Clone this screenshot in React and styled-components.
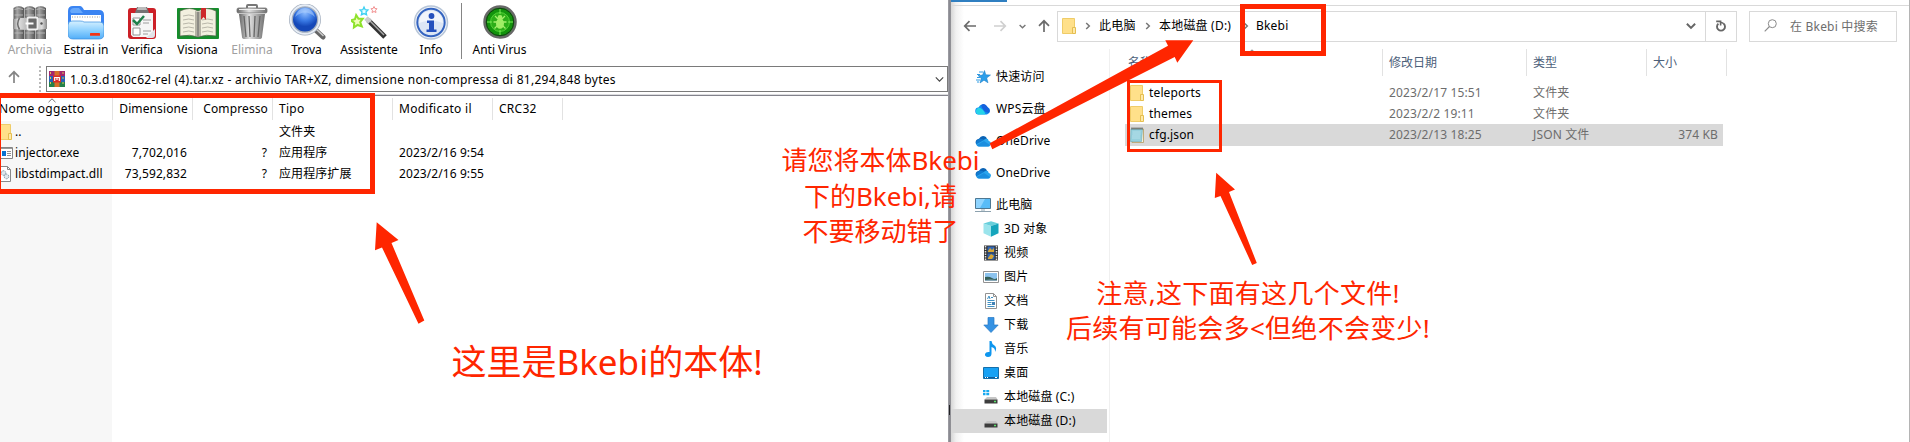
import React from "react";
import styled, { createGlobalStyle } from "styled-components";

const GlobalStyle = createGlobalStyle`
  * { box-sizing: border-box; }
  body {
    margin: 0;
    overflow: hidden;
    background: #fff;
    color: #000;
    font: 12px "Noto Sans", "Noto Sans CJK SC", sans-serif;
  }
  svg { display: block; flex: none; }
`;

const RED = "#ff2600";

const Desktop = styled.div`
  position: relative;
  display: flex;
  width: 1910px;
  height: 442px;
  overflow: hidden;
  white-space: nowrap;
`;

/* ---------- archive window ---------- */

const ArchiveWindow = styled.section`
  display: flex;
  flex-direction: column;
  width: 948px;
  background: #fff;
`;

const Toolbar = styled.div`
  display: flex;
  height: 62px;
  padding: 4px 0 0 2px;
`;

const ToolButton = styled.div`
  display: flex;
  flex-direction: column;
  align-items: center;
  width: ${(p) => p.$width}px;
  line-height: 19px;
  color: ${(p) => (p.$disabled ? "#a0a0a0" : "#000")};
`;

const ToolSeparator = styled.div`
  width: 1px;
  height: 56px;
  margin: -1px 2px 0 3px;
  background: #858585;
`;

const PathRow = styled.div`
  display: flex;
  height: 33px;
  padding-top: 4px;
  border-bottom: 1px solid #dcdcdf;
`;

const UpButton = styled.div`
  display: flex;
  justify-content: center;
  width: 27px;
  padding-top: 4px;
`;

const Grip = styled.div`
  width: 2px;
  height: 27px;
  margin: 0 5px 0 12px;
  background: repeating-linear-gradient(#b9b9b9 0 2px, #fff 2px 4px);
`;

const PathBox = styled.div`
  display: flex;
  align-items: center;
  flex: 1;
  height: 26px;
  padding: 0 3px 0 2px;
  border: 1px solid #7a7a7a;
`;

const PathText = styled.span`
  flex: 1;
  padding: 1px 0 0 5px;
  letter-spacing: 0.29px;
`;

const ArchiveTable = styled.div`
  flex: 1;
  border-top: 1px solid #83838c;
  background: linear-gradient(#f7f7f7, #f7f7f7) 0 25px / 112px 100% no-repeat;
`;

const ArchiveRow = styled.div`
  display: grid;
  grid-template-columns: 113px 80px 80px 120px 100px 70px;
  height: ${(p) => (p.$header ? 25 : 21)}px;
  line-height: ${(p) => (p.$header ? 25 : 21)}px;
  letter-spacing: ${(p) => (p.$header ? 0.27 : 0.08)}px;
`;

const ArchiveCell = styled.div`
  display: flex;
  align-items: center;
  justify-content: ${(p) => (p.$right ? "flex-end" : "flex-start")};
  gap: 2px;
  padding: 0 6px;
  ${(p) => p.$name && "padding: 0;"}
  ${(p) => p.$right && p.$header && "letter-spacing: 0.12px; padding-right: 5px;"}
  ${(p) =>
    p.$header &&
    `background: linear-gradient(#e2e2e2, #e2e2e2) right 0 top 2px / 1px 22px no-repeat;`}
`;

const NameText = styled.span`
  margin-left: ${(p) => p.$offset || 0}px;
`;

const HeaderCaret = styled.span`
  align-self: flex-start;
  margin: 2px 0 0 -38px;
`;

const WindowEdge = styled.div`
  width: 3px;
  background: linear-gradient(#202024, #202024) 1px 405px / 1px 10px no-repeat,
    linear-gradient(90deg, #a2a2a8, #85858c 60%, #97979b);
`;

/* ---------- explorer window ---------- */

const Explorer = styled.section`
  display: flex;
  flex-direction: column;
  width: 959px;
  border-right: 1px solid #b4b4b4;
  background: linear-gradient(90deg, #d6d6d6, #f1f1f1 5px, #fff 13px);
`;

const TabStrip = styled.div`
  height: 6px;
  border-bottom: 1px solid #d9d9d9;
  background: linear-gradient(#2f7fc1, #2f7fc1) 0 0 / 56px 2px no-repeat;
`;

const NavBar = styled.div`
  display: flex;
  align-items: center;
  height: 43px;
  padding: 0 12px 3px 12px;
`;

const NavButtons = styled.div`
  display: flex;
  align-items: center;
  width: 94px;
`;

const NavForward = styled.div`
  display: flex;
  justify-content: center;
  width: 42px;
  padding-left: 4px;
`;

const NavUp = styled.div`
  padding-left: 11px;
`;

const AddressBar = styled.div`
  display: flex;
  align-items: center;
  width: 680px;
  height: 31px;
  padding-left: 4px;
  border: 1px solid #d9d9d9;
  background: #fff;
`;

const Crumb = styled.span`
  width: ${(p) => p.$width}px;
  line-height: 29px;
  height: 31px;
  letter-spacing: 0.2px;
`;

const CrumbArrow = styled.span`
  display: flex;
  justify-content: center;
  width: ${(p) => p.$width}px;
`;

const AddressSpacer = styled.div`
  flex: 1;
`;

const AddressAction = styled.div`
  display: flex;
  align-items: center;
  justify-content: center;
  width: ${(p) => p.$width}px;
  height: 29px;
  border-left: ${(p) => (p.$divided ? "1px solid #d9d9d9" : "none")};
`;

const SearchBox = styled.div`
  display: flex;
  align-items: center;
  gap: 13px;
  width: 148px;
  height: 31px;
  margin-left: 12px;
  padding: 0 0 1px 14px;
  border: 1px solid #d9d9d9;
  color: #6d6d6d;
  letter-spacing: 0.2px;
`;

const ExplorerBody = styled.div`
  display: flex;
  flex: 1;
`;

const Sidebar = styled.nav`
  width: 159px;
  padding-top: 12px;
  border-right: 1px solid #f0f0f0;
`;

const SideItem = styled.div`
  display: flex;
  align-items: center;
  gap: 5px;
  width: 156px;
  height: ${(p) => (p.$child ? 24 : 32)}px;
  margin-bottom: ${(p) => (p.$last ? -4 : 0)}px;
  padding-left: ${(p) => (p.$child ? 32 : 24)}px;
  background: ${(p) => (p.$selected ? "#d9d9d9" : "transparent")};
`;

const SideLabel = styled.span`
  height: 24px;
  line-height: 23px;
  letter-spacing: 0.15px;
`;

const FileList = styled.div`
  flex: 1;
  padding-left: 15px;
`;

const FileRow = styled.div`
  display: grid;
  grid-template-columns: 258px 144px 120px 76px;
  width: 598px;
  height: ${(p) => p.$height}px;
  line-height: ${(p) => p.$height}px;
  letter-spacing: 0.14px;
  color: #6d6d6d;
  background: ${(p) => (p.$selected ? "#d9d9d9" : "transparent")};
`;

const FileHeader = styled(FileRow)`
  grid-template-columns: 258px 144px 120px 80px;
  width: 602px;
  margin-bottom: 6px;
  letter-spacing: 0;
  color: #4c607a;
`;

const HeaderCell = styled.div`
  display: flex;
  justify-content: space-between;
  padding-left: ${(p) => (p.$first ? 3 : 6)}px;
  border-right: 1px solid #e2e2e2;
`;

const SortMark = styled.span`
  width: 134px;
`;

const FileCell = styled.div`
  padding: 0 5px 0 6px;
  text-align: ${(p) => (p.$right ? "right" : "left")};
`;

const FileName = styled.div`
  display: flex;
  align-items: center;
  gap: 5px;
  padding-left: 5px;
  color: #000;
`;

/* ---------- annotations ---------- */

const MarkBox = styled.div`
  position: absolute;
  left: ${(p) => p.$x}px;
  top: ${(p) => p.$y}px;
  width: ${(p) => p.$w}px;
  height: ${(p) => p.$h}px;
  border: ${(p) => p.$stroke}px solid ${RED};
`;

const Arrows = styled.svg`
  position: absolute;
  left: 0;
  top: 0;
  fill: ${RED};
`;

const Note = styled.div`
  position: absolute;
  left: ${(p) => p.$x}px;
  top: ${(p) => p.$y}px;
  width: ${(p) => p.$w}px;
  color: ${RED};
  font-size: ${(p) => p.$size}px;
  line-height: ${(p) => p.$line}px;
  letter-spacing: ${(p) => p.$track || 0}px;
  text-align: center;
`;

/* ---------- icons ---------- */

const Ico = ({ s = 16, vb, children, w, h }) => (
  <svg width={w || s} height={h || s} viewBox={vb || `0 0 ${w || s} ${h || s}`}>
    {children}
  </svg>
);

const ArchiveIcon = () => (
  <Ico s={36}>
    <defs>
      <linearGradient id="book">
        <stop offset="0" stopColor="#5c5c5c" />
        <stop offset=".35" stopColor="#a6a6a6" />
        <stop offset="1" stopColor="#555" />
      </linearGradient>
      <linearGradient id="strap">
        <stop offset="0" stopColor="#8b8b8b" />
        <stop offset=".15" stopColor="#e2e2e2" />
        <stop offset=".5" stopColor="#a8a8a8" />
        <stop offset=".85" stopColor="#dcdcdc" />
        <stop offset="1" stopColor="#8b8b8b" />
      </linearGradient>
    </defs>
    {[1.5, 12.5, 23.5].map((x) => (
      <g key={x}>
        <path d={`M${x} 4q5-4 10.500 0v31H${x}z`} fill="url(#book)" />
        <path d={`M${x + 1} 5.500q4-2 8.500 0M${x + 1} 11h8.500M${x + 1} 29h8.500`} fill="none" stroke="#c2c2c2" strokeWidth=".8" />
      </g>
    ))}
    <path d="M1 15q17-3 34 0v10q-17 2-34 0z" fill="url(#strap)" />
    <path d="M7.500 14q-3.500 5.500 0 11.500" fill="none" stroke="#6e6e6e" strokeWidth="1.500" />
    <rect x="15.500" y="13.500" width="10" height="12" rx="1.500" fill="#6b6b6b" stroke="#f0f0f0" strokeWidth="1.800" />
    <path d="M13.500 19.500h8" stroke="#fff" strokeWidth="2" />
    <circle cx="29.500" cy="19.500" r="1.200" fill="#555" />
  </Ico>
);

const ExtractIcon = () => (
  <Ico s={36}>
    <defs>
      <linearGradient id="foldf" x2="0" y2="1">
        <stop offset="0" stopColor="#d6f0ff" />
        <stop offset=".5" stopColor="#91d2ff" />
        <stop offset="1" stopColor="#52aef8" />
      </linearGradient>
    </defs>
    <path d="M0 7q0-5 5-5h7q2 0 4 4h15q5 0 5 5v16H0z" fill="#3a84f2" />
    <path d="M2 7q1-3 4-3h5l4 5H3z" fill="#67a8fb" />
    <path d="M3 11h30v14H3z" fill="#fff" />
    <path d="M4 13h28" stroke="#ccc" strokeWidth="2" strokeDasharray="1 1.500" />
    <path d="M0 21q0-4 4-4h8q3 0 4 1h16q4 0 4 4v8q0 5-5 5H5q-5 0-5-5z" fill="url(#foldf)" stroke="#388de0" strokeWidth=".7" />
    <rect x="22" y="29" width="10" height="2.800" rx=".6" fill="#f43316" />
  </Ico>
);

const VerifyIcon = () => (
  <Ico s={36}>
    <rect x="4" y="4" width="28" height="31" rx="3" fill="#cc2027" />
    <path d="M7 9h22v23l-3 1H9l-2-2z" fill="#f6f6f6" />
    <path d="M22 34l9-9v6q0 3-3 3z" fill="#e1e3e8" />
    <path d="M13 3h10l2 6H11z" fill="#747474" />
    <path d="M14 3h8l1 3H13z" fill="#bbb" />
    <path d="M9 14h7v7H9zM9 24h7v7H9z" fill="#fff" stroke="#888" strokeWidth=".9" />
    <path d="M19 16h8M19 19h6M19 27h8M19 30h5" stroke="#9c9c9c" />
    <path d="M9 16l4 4 7-8" fill="none" stroke="#20804b" strokeWidth="2.500" />
  </Ico>
);

const ViewIcon = () => (
  <Ico w={42} h={36}>
    <rect y="4" width="42" height="31" rx="1" fill="#168d2c" />
    <path d="M3 7q10-5 18 0 8-5 18 0v25q-10-2-18 1-8-3-18-1z" fill="#f2f0df" stroke="#59634f" strokeWidth=".7" />
    <path d="M18 7l3 1 3-1v25h-6z" fill="#b5b3a5" />
    <path d="M21 8v25" stroke="#666" />
    <path d="M6 12q6-2 11 0M6 16q6-2 11 0M6 20q6-2 11 0M6 24q6-2 11 0M6 28q6-2 11 0M25 16q6-2 11 0M25 20q6-2 11 0M25 24q6-2 11 0M25 28q6-2 11 0" fill="none" stroke="#b9b7aa" />
    <path d="M24 4h5v12l-2.500-3-2.500 3z" fill="#cd292b" />
  </Ico>
);

const TrashIcon = () => (
  <Ico s={36}>
    <defs>
      <linearGradient id="trash">
        <stop offset="0" stopColor="#666" />
        <stop offset=".4" stopColor="#e0e0e0" />
        <stop offset="1" stopColor="#707070" />
      </linearGradient>
    </defs>
    <path d="M13 4V2q0-1 1-1h8q1 0 1 1v2" fill="none" stroke="#777" strokeWidth="2" />
    <path d="M5 10h26l-3 23q0 2-3 2H11q-3 0-3-2z" fill="url(#trash)" />
    <path d="M10 12l2 21M15 12l1 21M21 12l-1 21M26 12l-2 21" stroke="#666" strokeWidth="1.300" />
    <rect x="3" y="4" width="30" height="5" rx="1.500" fill="url(#trash)" stroke="#777" strokeWidth=".8" />
    <path d="M5 5.500h26" stroke="#eee" />
  </Ico>
);

const FindIcon = () => (
  <Ico w={38} h={36}>
    <defs>
      <radialGradient id="lens" cy=".25">
        <stop offset="0" stopColor="#91bfff" />
        <stop offset=".6" stopColor="#3979e4" />
        <stop offset="1" stopColor="#1548b8" />
      </radialGradient>
    </defs>
    <path d="M27 25.500l8 7.500" stroke="#666" strokeWidth="5" strokeLinecap="round" />
    <path d="M27 24l8.500 8" stroke="#ccc" strokeWidth="1.500" />
    <circle cx="17" cy="15.500" r="14" fill="url(#lens)" stroke="#a2adbd" strokeWidth="4" />
    <circle cx="17" cy="15.500" r="14.300" fill="none" stroke="#e7edf5" strokeWidth="2" />
    <path d="M7 13q10-9 20 0-3-9-10-9T7 13" fill="#b9d8ff" opacity=".5" />
  </Ico>
);

const star = "M0-6L1.800-2 6-1.500 3 1.500 4 6 0 4-4 6-3 1.500-6-1.500-1.800-2z";
const WizardIcon = () => (
  <Ico s={36}>
    <path d="M17 16l17 17" stroke="#333" strokeWidth="5" />
    <path d="M17 15l16 16" stroke="#aaa" strokeWidth="1.500" />
    <path d="M15 14l4 4" stroke="#ccc" strokeWidth="5" />
    <path d={star} transform="translate(6 17) rotate(-8)" fill="#f0ffb8" stroke="#8ee22c" strokeWidth="2" />
    <path d={star} transform="translate(13 7) scale(.65)" fill="#e8fdff" stroke="#3ed1f2" strokeWidth="2" />
    <path d={star} transform="translate(23 5.500) scale(.5)" fill="#fff" stroke="#f29090" strokeWidth="2" />
  </Ico>
);

const InfoIcon = () => (
  <Ico s={36}>
    <circle cx="18" cy="18.500" r="16.500" fill="#eef2f8" stroke="#b8c6d8" strokeWidth="1.500" />
    <circle cx="18" cy="18.500" r="13.700" fill="#dce6f5" stroke="#3464c0" strokeWidth="2" />
    <path d="M6 19q12-5 24 0-1-12-12-12T6 19" fill="#fff" opacity=".6" />
    <circle cx="18.500" cy="12" r="2.900" fill="#2450bd" />
    <path d="M14 16.500h7v9h2.500v2.500h-10v-2.500h2.500V19h-2z" fill="#2450bd" />
  </Ico>
);

const VirusIcon = () => (
  <Ico s={36}>
    <circle cx="18" cy="18" r="15.500" fill="#13940c" stroke="#686868" strokeWidth="2.500" />
    <circle cx="18" cy="18" r="13.700" fill="none" stroke="#143915" strokeWidth="1" />
    <circle cx="18" cy="18" r="9.500" fill="#2cae18" stroke="#62dd43" strokeWidth=".8" />
    <path d="M18 5v5M18 26v5M5 18h5M26 18h5" stroke="#7ced59" />
    <path d="M13 12l3 3M23 12l-3 3M11.500 18h13M12.500 24.500l3.500-3.500M23.500 24.500l-3.500-3.500" stroke="#a4ee6d" strokeWidth="1.300" />
    <ellipse cx="18" cy="19.500" rx="4" ry="5.200" fill="#a0ee66" />
    <circle cx="18" cy="13.500" r="2.400" fill="#a0ee66" />
  </Ico>
);

const RarIcon = () => (
  <Ico>
    <path d="M0 0h16v5H0z" fill="#a3276e" />
    <path d="M0 5h16v6H0z" fill="#2761b8" />
    <path d="M0 11h16v5H0z" fill="#24814a" />
    <path d="M1.500 1v14M14 1v14" stroke="#dac457" strokeWidth="1" strokeDasharray="2 3" />
    <path d="M5.500 0h5v16h-5z" fill="#d6702a" />
    <path d="M4 4.500h8v7H4z" fill="#d82c28" />
    <path d="M5.700 10V6.500h4.600V10M8 6v3" fill="none" stroke="#fff" strokeWidth="1.200" />
  </Ico>
);

const FolderIcon = () => (
  <Ico w={14} h={16}>
    <path d="M.5.500h12v15H.5z" fill="#ffe08a" stroke="#efcc68" />
    <path d="M10.500 9.500h3v6h-3z" fill="#ffe9a8" stroke="#e5be4f" />
  </Ico>
);

const ParentFolderIcon = () => (
  <Ico w={13} h={16}>
    <path d="M-2 .5h12.500v15H-2z" fill="#ffe08a" stroke="#efcc68" />
    <path d="M8.500 9.500h3v6h-3z" fill="#ffe9a8" stroke="#e5be4f" />
  </Ico>
);

const ExeIcon = () => (
  <Ico w={13} h={12}>
    <path d="M-2 .5h14.500v11H-2z" fill="#fff" stroke="#858585" />
    <path d="M0 1.500h12" stroke="#999" />
    <path d="M2 4h4v5H2z" fill="#0a73d0" />
    <path d="M7 4.500h4M7 6.500h4M7 8.500h4" stroke="#909090" />
  </Ico>
);

const DllIcon = () => (
  <Ico w={13} h={16}>
    <path d="M-2 .5H7.500l3 3v12H-2z" fill="#fff" stroke="#898989" />
    <path d="M7.500.500v3h3" fill="none" stroke="#898989" />
    <circle cx="3.500" cy="7" r="2.300" fill="#dde7ed" stroke="#879aa7" strokeDasharray="1.500 .7" />
    <circle cx="6.500" cy="10.500" r="2.300" fill="#dde7ed" stroke="#879aa7" strokeDasharray="1.500 .7" />
  </Ico>
);

const NoteIcon = () => (
  <Ico w={14} h={16}>
    <path d="M2 2h11.500v13.500H2z" fill="#f8f4e0" stroke="#b49c61" strokeWidth=".8" />
    <path d="M1 2h11.500l-1 12.500H.500z" fill="#96d0dd" stroke="#6ba8b4" strokeWidth=".6" />
    <path d="M2.500 5h8M2.500 7h8M2 9h8M2 11h8" stroke="#c3e7ee" strokeWidth=".7" />
    <path d="M1.500 1.500h11" stroke="#444" strokeWidth="2" strokeDasharray="1 1" />
  </Ico>
);

const UpArrow = ({ color = "#6b6b6b" }) => (
  <Ico s={14}>
    <path d="M7 13V2M2 6.800L7 1.800l5 5" fill="none" stroke={color} strokeWidth="1.700" />
  </Ico>
);

const SideArrow = ({ color, flip }) => (
  <Ico w={14} h={12}>
    <path d={flip ? "M1 6h11M7.500 1.200L12.300 6l-4.800 4.800" : "M13 6H2M6.500 1.200L1.700 6l4.800 4.800"} fill="none" stroke={color} strokeWidth="1.700" />
  </Ico>
);

const Down = ({ w = 8, color = "#666", sw = 1.6 }) => (
  <Ico w={w} h={w} vb="0 0 8 8">
    <path d="M.7 2.200L4 5.500l3.300-3.300" fill="none" stroke={color} strokeWidth={sw} />
  </Ico>
);

const Right = () => (
  <Ico w={6} h={8}>
    <path d="M1.200 1L4.300 4 1.200 7" fill="none" stroke="#777" strokeWidth="1.500" />
  </Ico>
);

const Caret = () => (
  <Ico w={8} h={5}>
    <path d="M.5 4.200L4 .8l3.500 3.400" fill="none" stroke="#777" />
  </Ico>
);

const Refresh = () => (
  <Ico w={12} h={12}>
    <path d="M3.400 3.600a4 4 0 1 0 5.200 0" fill="none" stroke="#666" strokeWidth="1.900" />
    <path d="M8.800 3.800Q7.500 2.400 5.500 2.500" fill="none" stroke="#666" strokeWidth="1.600" />
    <path d="M1.200 1.400h4.400v4.200" fill="none" stroke="#666" strokeWidth="1.600" />
  </Ico>
);

const Search = () => (
  <Ico w={13} h={13}>
    <circle cx="8.300" cy="4.700" r="4" fill="none" stroke="#8a8a8a" />
    <path d="M5.500 7.500L.7 12.300" stroke="#8a8a8a" strokeWidth="1.100" />
  </Ico>
);

const QuickIcon = () => (
  <Ico>
    <path d="M9.500 1.500l1.300 4.300 4.700.2-3.800 3 1.300 4.800-4-2.600L5 14l1.200-4.800L3 6.500l4.500-.4z" fill="#2b9eea" stroke="#1878c0" strokeWidth=".5" />
    <path d="M4 3h4M2 5.500h3M2 8.500h3M1 11h4M2 13h2" stroke="#2e9be3" />
  </Ico>
);

const WpsIcon = () => (
  <Ico>
    <path d="M4 13.500a3.500 3.500 0 0 1-.5-7A5 5 0 0 1 12.500 6 4 4 0 0 1 12 13.500z" fill="#128cf0" />
    <path d="M2 13q-3-4 1.500-6.500 5 1 7 7H4q-1 0-2-.5" fill="#25d3e8" />
    <path d="M6 4q4-3 7 3 3 2 1 5Q8 11 6 4" fill="#1561dd" />
  </Ico>
);

const OneDriveIcon = () => (
  <Ico>
    <path d="M1 11Q-.5 7 4 5.800 6.500 1.500 11 4l2 4-6 3z" fill="#0a63b5" />
    <path d="M4 6q4-1 6 2l-8 4q-3-3 2-6" fill="#117bd0" />
    <path d="M9 7q1-2 4-1 0 1.500 1 2 3 1 1.500 4Q15 13.500 13 13.500H4q-2 0-3-2z" fill="#2ba5ed" />
    <path d="M2 12l7-4 6 4q-1 1.500-2 1.500H4q-1.500 0-2-1.500" fill="#1b8edf" />
  </Ico>
);

const PcIcon = () => (
  <Ico>
    <path d="M.5 1.500h15v10H.5z" fill="#58bcf8" stroke="#4e7893" />
    <path d="M1 2h9L5 11H1z" fill="#8fd4ff" />
    <path d="M6 12h4v2H6z" fill="#c9d4da" />
    <path d="M0 14.500h16" stroke="#8ca1ae" />
  </Ico>
);

const CubeIcon = () => (
  <Ico>
    <path d="M.5 2.500L8 5v10.800L.5 12.300z" fill="#9be4ec" />
    <path d="M8 .3l7.500 2.200L8 5 .500 2.500z" fill="#68cfdb" />
    <path d="M8 5l7.500-2.500v9.800L8 15.800z" fill="#15a5bc" />
  </Ico>
);

const VideoIcon = () => (
  <Ico>
    <path d="M1 .5h14v15H1z" fill="#333" />
    <path d="M2.500 1v14M13.500 1v14" stroke="#ddd" strokeWidth="1.500" strokeDasharray="1.500 1" />
    <path d="M4.500 1.500h7v6h-7zM4.500 8.500h7v6h-7z" fill="#3166b5" />
    <path d="M5 6l2-3 2 2 2-2v4H5zM5 13l3-4 3 2-2 3H5z" fill="#d7a634" />
  </Ico>
);

const PictureIcon = () => (
  <Ico>
    <path d="M.5 2.500h15v11H.5z" fill="#fff" stroke="#929292" />
    <path d="M2 4h12v8H2z" fill="#8cc3ee" />
    <path d="M2 8q4-1 7 1t5 0v3H2z" fill="#35615a" />
    <path d="M2 11q5-1 12 0v1H2z" fill="#87a7b7" />
  </Ico>
);

const DocIcon = () => (
  <Ico>
    <path d="M2.500.500h8l3 3v12h-11z" fill="#fff" stroke="#929292" />
    <path d="M10.500.500v3h3" fill="none" stroke="#929292" />
    <path d="M4.500 6l1.500-3 1 3M8 4.500h2M4.500 7.500h7M4.500 9.500h4M4.500 11.500h4M4.500 13.500h7" fill="none" stroke="#3f91c4" />
    <path d="M9 9h3v3H9z" fill="#4182b5" />
  </Ico>
);

const DownloadIcon = () => (
  <Ico>
    <path d="M5 .5h6V8h4.200L8 15.500.8 8H5z" fill="#3592e3" stroke="#2678c4" strokeWidth=".7" />
  </Ico>
);

const MusicIcon = () => (
  <Ico>
    <path d="M6.500 0h2q.3 3 3 4.500 3 2.500.5 6.500.5-4-3.500-5v6.500Q8.500 16 5 16q-3.500-.3-3-3 .8-2.500 4.500-2z" fill="#0e96ee" />
  </Ico>
);

const DesktopIcon = () => (
  <Ico>
    <path d="M.5 2.500h15v11H.5z" fill="#17a1f4" stroke="#146fab" />
    <path d="M1 12.500h14" stroke="#0f5c9a" />
    <path d="M2 12.500h1M4 12.500h1M12 12.500h2" stroke="#fff" />
  </Ico>
);

const DriveIcon = ({ windows }) => (
  <Ico>
    {windows && <path d="M0 1h2.500v2.300H0zM3.300 1h2.900v2.300H3.300zM0 4h2.500v2.300H0zM3.300 4h2.900v2.300H3.300z" fill="#18a9ef" />}
    <path d="M4 8h9l1.500 2.500h-13z" fill="#c6c6c6" />
    <path d="M1.500 10.500h13v4h-13z" fill="#3d3d3d" />
    <path d="M11 12.500h2" stroke="#5be36b" strokeWidth="1.300" />
  </Ico>
);

/* ---------- data ---------- */

const tools = [
  ["Archivia", 56, ArchiveIcon, true],
  ["Estrai in", 56, ExtractIcon],
  ["Verifica", 56, VerifyIcon],
  ["Visiona", 55, ViewIcon],
  ["Elimina", 54, TrashIcon, true],
  ["Trova", 55, FindIcon],
  ["Assistente", 70, WizardIcon],
  ["Info", 54, InfoIcon],
];

const archiveFiles = [
  [ParentFolderIcon, "..", "", "", "文件夹", ""],
  [ExeIcon, "injector.exe", "7,702,016", "?", "应用程序", "2023/2/16 9:54"],
  [DllIcon, "libstdimpact.dll", "73,592,832", "?", "应用程序扩展", "2023/2/16 9:55"],
];

const places = [
  ["快速访问", QuickIcon],
  ["WPS云盘", WpsIcon],
  ["OneDrive", OneDriveIcon],
  ["OneDrive", OneDriveIcon],
  ["此电脑", PcIcon],
];

const children = [
  ["3D 对象", CubeIcon],
  ["视频", VideoIcon],
  ["图片", PictureIcon],
  ["文档", DocIcon],
  ["下载", DownloadIcon],
  ["音乐", MusicIcon],
  ["桌面", DesktopIcon],
];

const files = [
  [FolderIcon, "teleports", "2023/2/17 15:51", "文件夹", "", 21],
  [FolderIcon, "themes", "2023/2/2 19:11", "文件夹", "", 21],
  [NoteIcon, "cfg.json", "2023/2/13 18:25", "JSON 文件", "374 KB", 22],
];

export default function App() {
  return (
    <>
      <GlobalStyle />
      <Desktop>
        <ArchiveWindow>
          <Toolbar>
            {tools.map(([label, width, Icon, disabled]) => (
              <ToolButton key={label} $width={width} $disabled={disabled}>
                <Icon />
                {label}
              </ToolButton>
            ))}
            <ToolSeparator />
            <ToolButton $width={71}>
              <VirusIcon />
              Anti Virus
            </ToolButton>
          </Toolbar>
          <PathRow>
            <UpButton>
              <UpArrow color="#858585" />
            </UpButton>
            <Grip />
            <PathBox>
              <RarIcon />
              <PathText>1.0.3.d180c62-rel (4).tar.xz - archivio TAR+XZ, dimensione non-compressa di 81,294,848 bytes</PathText>
              <Down w={9} color="#444" sw={1} />
            </PathBox>
          </PathRow>
          <ArchiveTable>
            <ArchiveRow $header>
              <ArchiveCell $header $name>
                <NameText $offset={-1}>Nome oggetto</NameText>
                <HeaderCaret>
                  <Caret />
                </HeaderCaret>
              </ArchiveCell>
              <ArchiveCell $header $right>Dimensione</ArchiveCell>
              <ArchiveCell $header $right>Compresso</ArchiveCell>
              <ArchiveCell $header>Tipo</ArchiveCell>
              <ArchiveCell $header>Modificato il</ArchiveCell>
              <ArchiveCell $header>CRC32</ArchiveCell>
            </ArchiveRow>
            {archiveFiles.map(([Icon, name, size, packed, type, date]) => (
              <ArchiveRow key={name}>
                <ArchiveCell $name>
                  <Icon />
                  <NameText>{name}</NameText>
                </ArchiveCell>
                <ArchiveCell $right>{size}</ArchiveCell>
                <ArchiveCell $right>{packed}</ArchiveCell>
                <ArchiveCell>{type}</ArchiveCell>
                <ArchiveCell>{date}</ArchiveCell>
              </ArchiveRow>
            ))}
          </ArchiveTable>
        </ArchiveWindow>
        <WindowEdge />
        <Explorer>
          <TabStrip />
          <NavBar>
            <NavButtons>
              <SideArrow color="#6b6b6b" />
              <NavForward>
                <SideArrow color="#d0d0d0" flip />
              </NavForward>
              <Down w={7} color="#777" />
              <NavUp>
                <UpArrow />
              </NavUp>
            </NavButtons>
            <AddressBar>
              <FolderIcon />
              <CrumbArrow $width={23}><Right /></CrumbArrow>
              <Crumb $width={38}>此电脑</Crumb>
              <CrumbArrow $width={22}><Right /></CrumbArrow>
              <Crumb $width={76}>本地磁盘 (D:)</Crumb>
              <CrumbArrow $width={21}><Right /></CrumbArrow>
              <Crumb $width={40}>Bkebi</Crumb>
              <AddressSpacer />
              <AddressAction $width={28}><Down w={10} /></AddressAction>
              <AddressAction $width={31} $divided><Refresh /></AddressAction>
            </AddressBar>
            <SearchBox>
              <Search />
              在 Bkebi 中搜索
            </SearchBox>
          </NavBar>
          <ExplorerBody>
            <Sidebar>
              {places.map(([label, Icon], i) => (
                <SideItem key={i} $last={i === places.length - 1}>
                  <Icon />
                  <SideLabel>{label}</SideLabel>
                </SideItem>
              ))}
              {children.map(([label, Icon]) => (
                <SideItem key={label} $child>
                  <Icon />
                  <SideLabel>{label}</SideLabel>
                </SideItem>
              ))}
              <SideItem $child>
                <DriveIcon windows />
                <SideLabel>本地磁盘 (C:)</SideLabel>
              </SideItem>
              <SideItem $child $selected>
                <DriveIcon />
                <SideLabel>本地磁盘 (D:)</SideLabel>
              </SideItem>
            </Sidebar>
            <FileList>
              <FileHeader $height={27}>
                <HeaderCell $first>
                  名称
                  <SortMark><Caret /></SortMark>
                </HeaderCell>
                <HeaderCell>修改日期</HeaderCell>
                <HeaderCell>类型</HeaderCell>
                <HeaderCell>大小</HeaderCell>
              </FileHeader>
              {files.map(([Icon, name, date, type, size, height]) => (
                <FileRow key={name} $height={height} $selected={size !== ""}>
                  <FileName>
                    <Icon />
                    {name}
                  </FileName>
                  <FileCell>{date}</FileCell>
                  <FileCell>{type}</FileCell>
                  <FileCell $right>{size}</FileCell>
                </FileRow>
              ))}
            </FileList>
          </ExplorerBody>
        </Explorer>

        <MarkBox $x={-4} $y={93} $w={378.5} $h={101} $stroke={5} />
        <MarkBox $x={1240} $y={4} $w={86} $h={52} $stroke={5} />
        <MarkBox $x={1127} $y={80} $w={94.5} $h={72} $stroke={3} />
        <Arrows width="1910" height="442">
          <path d="M376.700 222.300L398.500 240l-7 3L424.300 320.500l-5.800 3.200L382 247.500l-7 2.800z" />
          <path d="M1216.200 172.800L1235 189.500l-6 2.500L1256.800 263l-4.600 2L1220.500 196l-5.700 2z" />
          <path d="M1193.300 40.300L1177.300 62.700l-2.600-5.700L992.300 149.300l-2.600-6L1168 45.700l-2.700-5.400z" />
        </Arrows>
        <Note $x={740} $y={143} $w={281} $size={26} $line={35.5}>
          请您将本体Bkebi
          <br />
          下的Bkebi,请
          <br />
          不要移动错了
        </Note>
        <Note $x={406} $y={338} $w={402} $size={35} $line={48}>这里是Bkebi的本体!</Note>
        <Note $x={1047} $y={276} $w={402} $size={26} $line={35} $track={0.28}>
          注意,这下面有这几个文件!
          <br />
          后续有可能会多&lt;但绝不会变少!
        </Note>
      </Desktop>
    </>
  );
}
